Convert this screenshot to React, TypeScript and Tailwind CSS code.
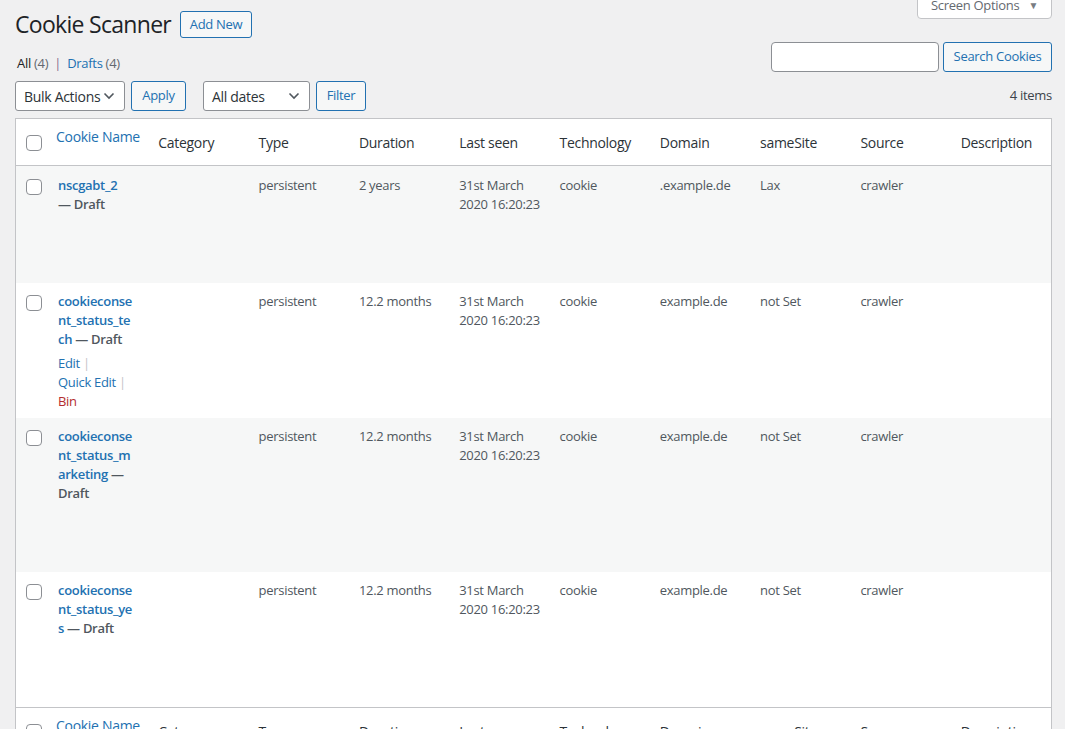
import React from "react";

const FONT = { fontFamily: '"Open Sans", "Noto Sans", sans-serif' };

function Checkbox() {
  return <span className="block w-4 h-4 rounded-[4px] border border-[#8c8f94] bg-white" />;
}

function Chevron() {
  return (
    <svg width="12" height="8" viewBox="0 0 12 8" className="shrink-0">
      <polyline points="1.5,1.5 6,6 10.5,1.5" fill="none" stroke="#50575e" strokeWidth="1.6" />
    </svg>
  );
}

const headers = ["Category", "Type", "Duration", "Last seen", "Technology", "Domain", "sameSite", "Source", "Description"];

function HeaderRow({ top }: { top: boolean }) {
  return (
    <div
      className={`grid grid-cols-[32px_repeat(10,minmax(0,1fr))] h-[47px] bg-white ${
        top ? "border-b" : "border-t"
      } border-[#c3c4c7]`}
    >
      <div className="pl-[10px] pt-[16px]">
        <Checkbox />
      </div>
      <div className="pl-[8px] pt-[8px] text-[14px] leading-[19px] text-[#2271b1] whitespace-nowrap">Cookie Name</div>
      {headers.map((h) => (
        <div key={h} className="pl-[10px] flex items-center text-[14px] text-[#2c3338] whitespace-nowrap">
          {h}
        </div>
      ))}
    </div>
  );
}

type Row = {
  h: string;
  bg: string;
  nameLines: React.ReactNode[];
  duration: string;
  domain: string;
  same: string;
  actions?: boolean;
};

const rows: Row[] = [
  {
    h: "h-[117px]",
    bg: "bg-[#f6f7f7]",
    nameLines: [
      <span className="text-[#2271b1]">nscgabt_2</span>,
      <span>— Draft</span>,
    ],
    duration: "2 years",
    domain: ".example.de",
    same: "Lax",
  },
  {
    h: "h-[135px]",
    bg: "bg-white",
    nameLines: [
      <span className="text-[#2271b1]">cookieconse</span>,
      <span className="text-[#2271b1]">nt_status_te</span>,
      <span>
        <span className="text-[#2271b1]">ch</span> — Draft
      </span>,
    ],
    duration: "12.2 months",
    domain: "example.de",
    same: "not Set",
    actions: true,
  },
  {
    h: "h-[154px]",
    bg: "bg-[#f6f7f7]",
    nameLines: [
      <span className="text-[#2271b1]">cookieconse</span>,
      <span className="text-[#2271b1]">nt_status_m</span>,
      <span>
        <span className="text-[#2271b1]">arketing</span> —
      </span>,
      <span>Draft</span>,
    ],
    duration: "12.2 months",
    domain: "example.de",
    same: "not Set",
  },
  {
    h: "h-[135px]",
    bg: "bg-white",
    nameLines: [
      <span className="text-[#2271b1]">cookieconse</span>,
      <span className="text-[#2271b1]">nt_status_ye</span>,
      <span>
        <span className="text-[#2271b1]">s</span> — Draft
      </span>,
    ],
    duration: "12.2 months",
    domain: "example.de",
    same: "not Set",
  },
];

function Cell({ children }: { children?: React.ReactNode }) {
  return <div className="pl-[10px] pt-[9px] text-[13px] leading-[19px] text-[#50575e] whitespace-nowrap">{children}</div>;
}

function BodyRow({ r, first }: { r: Row; first: boolean }) {
  return (
    <div className={`grid grid-cols-[32px_repeat(10,minmax(0,1fr))] ${r.h} ${r.bg} ${first ? "pt-[1px]" : ""}`}>
      <div className="pl-[10px] pt-[12px]">
        <Checkbox />
      </div>
      <div className="pl-[10px] pt-[9px] text-[13px] leading-[19px] font-semibold text-[#50575e]">
        {r.nameLines.map((l, i) => (
          <div key={i} className="whitespace-nowrap">
            {l}
          </div>
        ))}
        {r.actions && (
          <div className="mt-[5px] font-normal">
            <div className="text-[#2271b1]">
              Edit <span className="text-[#c3c4c7]">|</span>
            </div>
            <div className="text-[#2271b1]">
              Quick Edit <span className="text-[#c3c4c7]">|</span>
            </div>
            <div className="text-[#b32d2e]">Bin</div>
          </div>
        )}
      </div>
      <Cell />
      <Cell>persistent</Cell>
      <Cell>{r.duration}</Cell>
      <Cell>
        <div>31st March</div>
        <div>2020 16:20:23</div>
      </Cell>
      <Cell>cookie</Cell>
      <Cell>{r.domain}</Cell>
      <Cell>{r.same}</Cell>
      <Cell>crawler</Cell>
      <Cell />
    </div>
  );
}

export default function App() {
  return (
    <div className="min-h-[729px] bg-[#f0f0f1] overflow-hidden tracking-[-0.3px]" style={FONT}>
      <div className="relative pl-[15px] pr-[13px]">
        <div className="absolute right-[13px] -top-[8px] h-[27px] w-[135px] bg-white border border-[#c3c4c7] rounded-b-[4px] flex items-center justify-center gap-[9px] text-[13px] text-[#646970]">
          <span>Screen Options</span>
          <span className="text-[10px] text-[#787c82]">▼</span>
        </div>

        <div className="pt-[11px] flex items-center">
          <h1 className="text-[23px] leading-[27px] text-[#1d2327] font-normal -mt-[1px] tracking-[-0.7px]">
            Cookie Scanner
          </h1>
          <button className="ml-[9px] h-[27px] w-[72px] border border-[#2271b1] rounded-[3px] bg-[#f6f7f7] text-[13px] text-[#2271b1] leading-none">
            Add New
          </button>
        </div>

        <div className="flex items-end justify-between mt-[4px]">
          <div className="text-[13px] leading-[18px] pl-[2px] text-[#646970]">
            <span className="text-[#1d2327]">All</span> (4) <span className="mx-[3px] text-[#8a6d8f]">|</span>{" "}
            <span className="text-[#2271b1]">Drafts</span> (4)
          </div>
          <div className="flex gap-[4px]">
            <div className="w-[168px] h-[30px] bg-white border border-[#8c8f94] rounded-[4px]" />
            <button className="h-[30px] w-[109px] border border-[#2271b1] rounded-[3px] bg-[#f6f7f7] text-[13px] text-[#2271b1] whitespace-nowrap">
              Search Cookies
            </button>
          </div>
        </div>

        <div className="flex items-center mt-[9px] h-[30px]">
          <div className="w-[110px] h-[30px] bg-white border border-[#8c8f94] rounded-[3px] flex items-center justify-between pl-[8px] pr-[9px] text-[14px] text-[#2c3338] whitespace-nowrap">
            <span>Bulk Actions</span>
            <Chevron />
          </div>
          <button className="ml-[6px] w-[55px] h-[30px] border border-[#2271b1] rounded-[3px] bg-[#f6f7f7] text-[13px] text-[#2271b1]">
            Apply
          </button>
          <div className="ml-[17px] w-[107px] h-[30px] bg-white border border-[#8c8f94] rounded-[3px] flex items-center justify-between pl-[8px] pr-[9px] text-[14px] text-[#2c3338] whitespace-nowrap">
            <span>All dates</span>
            <Chevron />
          </div>
          <button className="ml-[6px] w-[50px] h-[30px] border border-[#2271b1] rounded-[3px] bg-[#f6f7f7] text-[13px] text-[#2271b1]">
            Filter
          </button>
          <div className="ml-auto text-[13px] text-[#3c434a]">4 items</div>
        </div>

        <div className="mt-[7px] border border-[#c3c4c7] bg-white">
          <HeaderRow top />
          {rows.map((r, i) => (
            <BodyRow key={i} r={r} first={i === 0} />
          ))}
          <HeaderRow top={false} />
        </div>
      </div>
    </div>
  );
}
